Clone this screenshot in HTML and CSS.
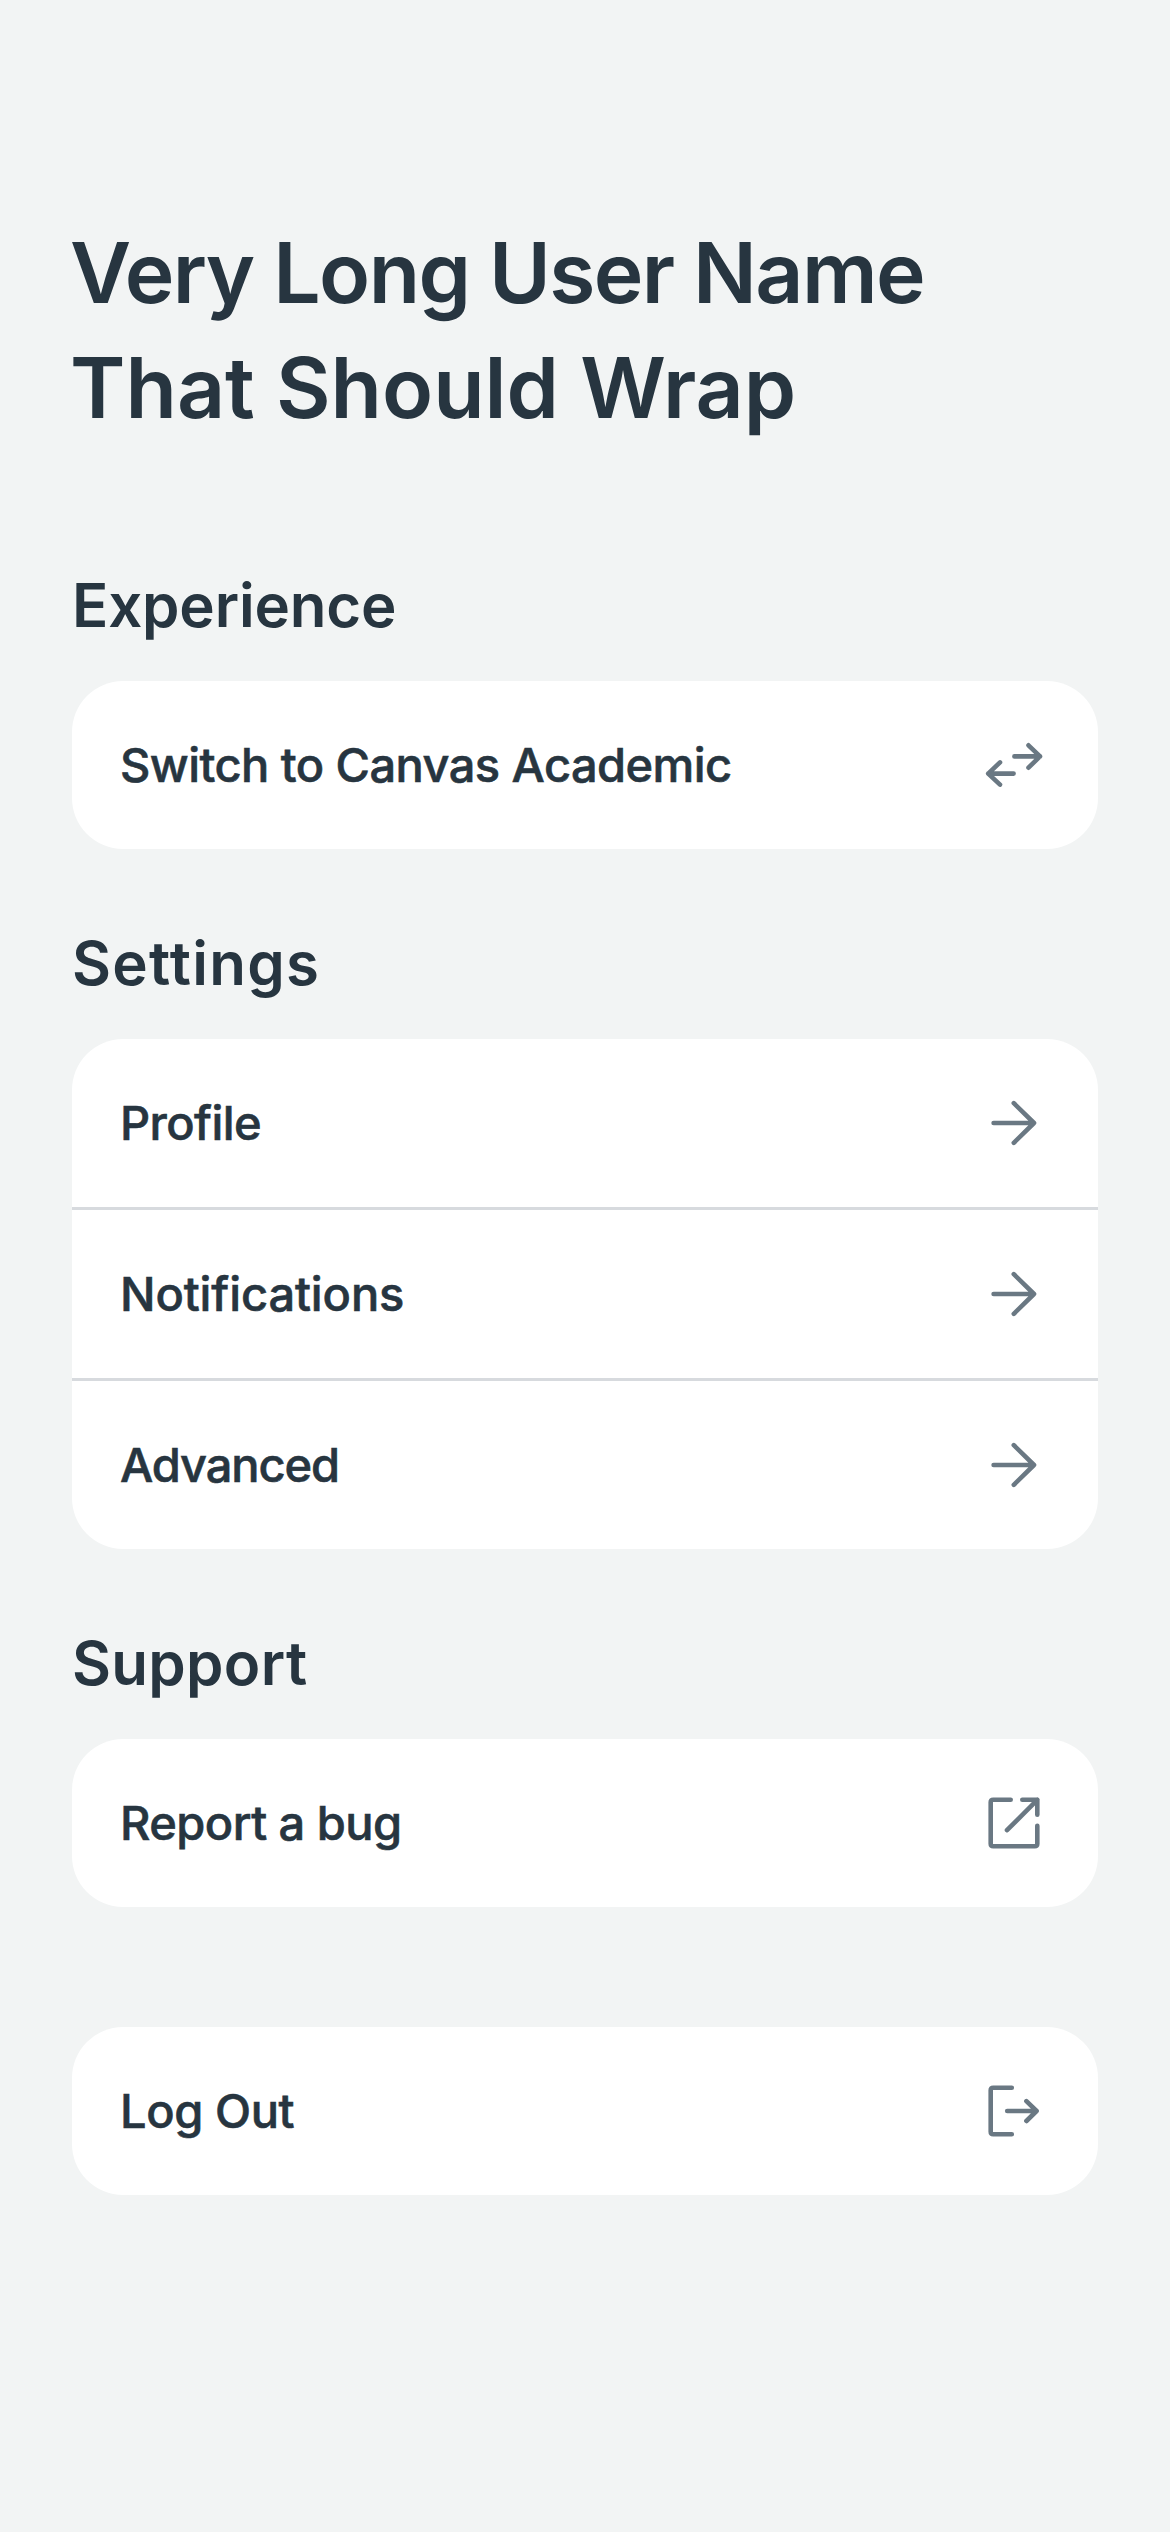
FILE: index.html
```html
<!DOCTYPE html>
<html lang="en">
<head>
<meta charset="utf-8">
<title>Settings</title>
<link rel="stylesheet" href="styles.css">
</head>
<body>
<main class="screen">
  <h1 class="title"><span class="title-first">Very Long User Name</span><br>That Should Wrap</h1>

  <section class="section">
    <h2 class="heading experience">Experience</h2>
    <div class="card">
      <div class="row">
        <span class="label switch">Switch to Canvas Academic</span>
        <svg class="icon" viewBox="0 0 72 72"><path d="M36.4 27.4H62M50.5 16.3 62 27.4 50.5 38.7M35.6 44.6H10.2M22 33.4 10.2 44.6 22 55.6"/></svg>
      </div>
    </div>
  </section>

  <section class="section">
    <h2 class="heading settings">Settings</h2>
    <div class="card">
      <div class="row">
        <span class="label profile">Profile</span>
        <svg class="icon" viewBox="0 0 72 72"><path d="M15.6 36H56M35.8 16.2 56 36 35.8 55.8"/></svg>
      </div>
      <div class="row">
        <span class="label notifications">Notifications</span>
        <svg class="icon" viewBox="0 0 72 72"><path d="M15.6 36H56M35.8 16.2 56 36 35.8 55.8"/></svg>
      </div>
      <div class="row">
        <span class="label advanced">Advanced</span>
        <svg class="icon" viewBox="0 0 72 72"><path d="M15.6 36H56M35.8 16.2 56 36 35.8 55.8"/></svg>
      </div>
    </div>
  </section>

  <section class="section">
    <h2 class="heading support">Support</h2>
    <div class="card">
      <div class="row">
        <span class="label report">Report a bug</span>
        <svg class="icon" viewBox="0 0 72 72"><path d="M32.7 12.8H15.2Q12.7 12.8 12.7 15.3V56.7Q12.7 59.2 15.2 59.2H56.8Q59.3 59.2 59.3 56.7V38.7M59.3 27.7V12.8H44.3M59.3 12.8 29 43.2"/></svg>
      </div>
    </div>
  </section>

  <div class="card logout-card">
    <div class="row">
      <span class="label logout">Log Out</span>
      <svg class="icon" viewBox="0 0 72 72"><path d="M33.8 12.8H15.2Q12.7 12.8 12.7 15.3V56.7Q12.7 59.2 15.2 59.2H33.8M29.2 36H58.6M48.4 26.2 58.6 36 48.4 46"/></svg>
    </div>
  </div>
</main>
</body>
</html>
```
FILE: styles.css
```css
* {
  box-sizing: border-box;
}

body {
  margin: 0;
  background: #f2f4f4;
  color: #273540;
  font-family: Inter, "Liberation Sans", sans-serif;
}

.screen {
  display: flex;
  flex-direction: column;
  min-height: 2532px;
  padding: 215px 72px 0;
}

.title {
  margin: 0 0 0 -2px;
  font-size: 84px;
  font-weight: 600;
  line-height: 115px;
}

.title-first {
  letter-spacing: -1.6px;
}

.section {
  display: flex;
  flex-direction: column;
}

.heading {
  height: 72px;
  margin: 78px 0 40px;
  font-size: 60px;
  font-weight: 600;
  line-height: 72px;
}

.title + .section .heading {
  margin-top: 124px;
}

.experience {
  letter-spacing: -0.18px;
}

.settings {
  letter-spacing: 1.3px;
}

.support {
  letter-spacing: 0.3px;
}

.card {
  overflow: hidden;
  border-radius: 51px;
  background: #fff;
}

.logout-card {
  margin-top: 120px;
}

.row {
  display: flex;
  align-items: center;
  justify-content: space-between;
  height: 168px;
  padding: 0 48px;
}

.row + .row {
  height: 171px;
  border-top: 3px solid #d7dade;
}

.label {
  font-size: 47px;
  font-weight: 500;
  line-height: 60px;
  -webkit-text-stroke: 0.6px #273540;
}

.switch {
  letter-spacing: -0.56px;
}

.profile {
  letter-spacing: -0.58px;
}

.notifications {
  letter-spacing: -0.11px;
}

.advanced {
  letter-spacing: -1.11px;
}

.report {
  letter-spacing: -0.54px;
}

.logout {
  letter-spacing: -0.4px;
}

.icon {
  width: 72px;
  height: 72px;
  fill: none;
  stroke: #6a7883;
  stroke-width: 4.6;
  stroke-linecap: round;
  stroke-linejoin: round;
}
```
